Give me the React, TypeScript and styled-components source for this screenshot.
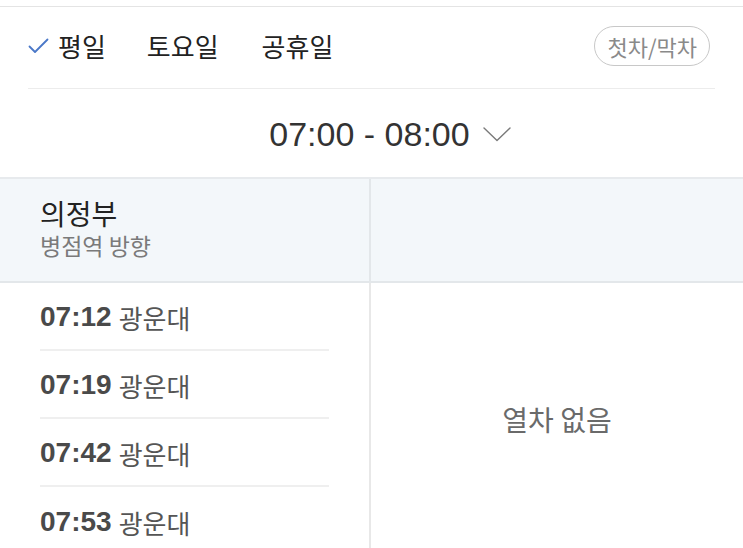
import styled, { createGlobalStyle } from "styled-components";

const GlobalStyle = createGlobalStyle`
  html, body {
    margin: 0;
    padding: 0;
    background: #ffffff;
  }
  body {
    font-family: "Noto Sans CJK KR", "Noto Sans", sans-serif;
    color: #222;
  }
`;

const Page = styled.div`
  margin-top: 6px;
  border-top: 1px solid #e4e4e4;
  width: 743px;
  height: 541px;
  overflow: hidden;
`;

const TabBar = styled.div`
  margin: 0 28px;
  height: 82px;
  display: flex;
  align-items: center;
  border-bottom: 1.5px solid #ececec;
  padding-bottom: 4px;
  box-sizing: border-box;
`;

const Tab = styled.div<{ $active?: boolean }>`
  display: flex;
  align-items: center;
  gap: 9px;
  font-size: 26px;
  color: #222;
  margin-right: ${(p) => (p.$active ? "41px" : "43px")};
  line-height: 1;
`;

const Pill = styled.div`
  margin-left: auto;
  margin-right: 5px;
  height: 40px;
  padding: 0 12px;
  border: 1.5px solid #c8c8c8;
  border-radius: 20px;
  display: flex;
  align-items: center;
  font-size: 22px;
  color: #8a8a8a;
  box-sizing: border-box;
`;

const TimeSelect = styled.div`
  height: 88px;
  display: flex;
  align-items: center;
  justify-content: center;
  gap: 13px;
  font-family: "Liberation Sans", Arial, sans-serif;
  font-size: 34px;
  color: #333;
  padding: 2px 0 0 37px;
  box-sizing: border-box;
`;

const Table = styled.div`
  display: grid;
  grid-template-columns: 371px 1fr;
  border-top: 2px solid #e7eaed;
`;

const HeadCell = styled.div<{ $left?: boolean }>`
  height: 104px;
  background: #f3f7fa;
  border-bottom: 2px solid #e3e7ea;
  border-right: ${(p) => (p.$left ? "2px solid #e3e7ea" : "none")};
  padding: 17px 40px 0;
  box-sizing: border-box;
`;

const Station = styled.div`
  font-size: 28px;
  color: #222;
  line-height: 34px;
`;

const Direction = styled.div`
  font-size: 23px;
  color: #7a7a7a;
  line-height: 30px;
`;

const List = styled.div`
  padding: 0 40px;
  border-right: 2px solid #e8e8e8;
`;

const Row = styled.div`
  height: 68px;
  display: flex;
  align-items: center;
  gap: 7px;
  font-size: 26px;
  color: #555;
  border-bottom: 2px solid #efefef;
  box-sizing: border-box;
  padding-top: 2px;
  &:last-child {
    border-bottom: none;
  }
`;

const Time = styled.span`
  font-family: "Liberation Sans", Arial, sans-serif;
  font-size: 28px;
  font-weight: 700;
  color: #4a4a4a;
`;

const Empty = styled.div`
  display: flex;
  align-items: center;
  justify-content: center;
  font-size: 28px;
  color: #6a6a6a;
`;

const Check = () => (
  <svg width="21" height="16" viewBox="0 0 21 16">
    <polyline
      points="1.5,8.5 7,14 19.5,1.5"
      fill="none"
      stroke="#4a78c8"
      strokeWidth="1.8"
      strokeLinecap="round"
      strokeLinejoin="round"
    />
  </svg>
);

const Chevron = () => (
  <svg width="28" height="15" viewBox="0 0 28 15">
    <polyline
      points="1,1 14,13.5 27,1"
      fill="none"
      stroke="#7a7a7a"
      strokeWidth="1.4"
      strokeLinecap="round"
      strokeLinejoin="round"
    />
  </svg>
);

const trains = ["07:12", "07:19", "07:42", "07:53"];

export default function App() {
  return (
    <>
      <GlobalStyle />
      <Page>
        <TabBar>
          <Tab $active>
            <Check />
            평일
          </Tab>
          <Tab>토요일</Tab>
          <Tab>공휴일</Tab>
          <Pill>첫차/막차</Pill>
        </TabBar>
        <TimeSelect>
          07:00 - 08:00
          <Chevron />
        </TimeSelect>
        <Table>
          <HeadCell $left>
            <Station>의정부</Station>
            <Direction>병점역 방향</Direction>
          </HeadCell>
          <HeadCell />
          <List>
            {trains.map((t) => (
              <Row key={t}>
                <Time>{t}</Time>
                광운대
              </Row>
            ))}
          </List>
          <Empty>열차 없음</Empty>
        </Table>
      </Page>
    </>
  );
}
